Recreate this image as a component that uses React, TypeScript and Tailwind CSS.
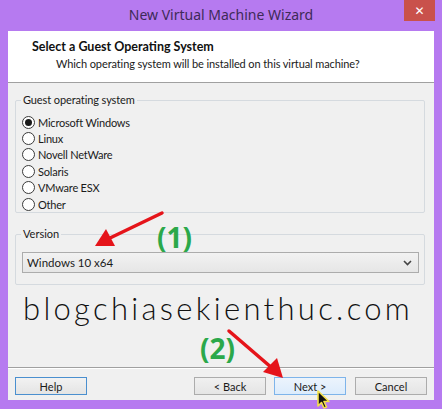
import React from "react";

const UI = '"Lato", "Noto Sans", "Liberation Sans", sans-serif';

function Radio({ label, checked }: { label: string; checked?: boolean }) {
  return (
    <div className="flex items-center h-[16.4px]">
      <div className="w-[13px] h-[13px] rounded-full border border-[#3a3a3a] bg-white flex items-center justify-center">
        {checked && <div className="w-[7px] h-[7px] rounded-full bg-[#1a1a1a]" />}
      </div>
      <span className="ml-[3px] text-[11px] tracking-[-0.2px] text-[#1a1a1a] leading-none">{label}</span>
    </div>
  );
}

function Btn({ label, variant }: { label: string; variant: "default" | "normal" | "hover" }) {
  const cls =
    variant === "default"
      ? "border-[#4a8fcf] bg-gradient-to-b from-[#f2f2f2] to-[#e4e4e4]"
      : variant === "hover"
      ? "border-[#7eb4ea] bg-gradient-to-b from-[#ecf4fc] to-[#dcecfc]"
      : "border-[#acacac] bg-gradient-to-b from-[#f0f0f0] to-[#e5e5e5]";
  return (
    <div
      className={`w-[72px] h-[18px] border ${cls} flex items-center justify-center text-[11px] text-[#1a1a1a] leading-none`}
    >
      {label}
    </div>
  );
}

export default function App() {
  return (
    <div
      className="relative w-[442px] h-[409px] bg-[#b67af0] flex flex-col overflow-hidden"
      style={{ fontFamily: UI }}
    >
      {/* title bar */}
      <div className="relative h-[31px] flex items-center justify-center">
        <span
          className="text-[14px] text-[#3e2a58] leading-none -mt-[1px]"
          style={{ fontFamily: '"Noto Sans", sans-serif' }}
        >
          New Virtual Machine Wizard
        </span>
        <div className="absolute right-[7px] top-0 w-[31px] h-[21px] bg-[#c9514b] flex items-center justify-center">
          <span className="text-white text-[12px] leading-none font-bold" style={{ fontFamily: '"DejaVu Sans", sans-serif' }}>✕</span>
        </div>
      </div>

      {/* client area */}
      <div className="mx-[8px] h-[369px] bg-[#f0f0f0] flex flex-col">
        {/* header */}
        <div className="h-[52px] bg-white border-b border-[#a0a0a0] pl-[24px] pt-[8px] flex flex-col">
          <span className="text-[12.5px] font-bold text-[#111] leading-[15px]">Select a Guest Operating System</span>
          <span className="text-[11px] tracking-[-0.1px] text-[#1a1a1a] leading-[15px] mt-[2px] pl-[24px]">
            Which operating system will be installed on this virtual machine?
          </span>
        </div>

        {/* guest OS group */}
        <div className="relative mt-[17px] ml-[7px] w-[410px] h-[113px] border border-[#d5dadf] rounded-[2px] pl-[6px] pt-[13px]">
          <span className="absolute -top-[8px] left-[5px] bg-[#f0f0f0] px-[2px] text-[11px] tracking-[-0.1px] text-[#1a1a1a] leading-[14px]">
            Guest operating system
          </span>
          <Radio label="Microsoft Windows" checked />
          <Radio label="Linux" />
          <Radio label="Novell NetWare" />
          <Radio label="Solaris" />
          <Radio label="VMware ESX" />
          <Radio label="Other" />
        </div>

        {/* version group */}
        <div className="relative mt-[21px] ml-[7px] w-[410px] h-[51px] border border-[#d5dadf] rounded-[2px] pl-[6px] pr-[5px] pt-[17px]">
          <span className="absolute -top-[8px] left-[5px] bg-[#f0f0f0] px-[2px] text-[11px] text-[#1a1a1a] leading-[14px]">
            Version
          </span>
          <div className="h-[21px] border border-[#acacac] bg-gradient-to-b from-[#f2f2f2] to-[#e6e6e6] flex items-center pl-[4px] pr-[6px]">
            <span className="flex-1 text-[11.5px] text-[#1a1a1a] leading-none">Windows 10 x64</span>
            <svg width="9" height="6" viewBox="0 0 9 6">
              <path d="M1 1 L4.5 4.5 L8 1" stroke="#444" strokeWidth="1.6" fill="none" />
            </svg>
          </div>
        </div>

        {/* watermark */}
        <div className="h-[82px] flex items-start pl-[15px] pt-[4px]">
          <span
            className="text-[31px] text-[#111] leading-[38px] tracking-[3.3px] font-light"
            style={{ fontFamily: '"Lato", "Noto Sans", sans-serif' }}
          >
            blogchiasekienthuc.com
          </span>
        </div>

        {/* separator */}
        <div className="h-px bg-[#a0a0a0]" />
        <div className="h-px bg-white" />

        {/* buttons */}
        <div className="mt-[8px] flex items-center pl-[7px] pr-[7px]">
          <Btn label="Help" variant="default" />
          <div className="flex-1" />
          <Btn label="< Back" variant="normal" />
          <div className="w-[8px]" />
          <Btn label="Next >" variant="hover" />
          <div className="w-[9px]" />
          <Btn label="Cancel" variant="normal" />
        </div>
      </div>

      {/* annotations overlay */}
      <svg className="absolute left-0 top-0 pointer-events-none" width="442" height="409" viewBox="0 0 442 409">
        <line x1="162" y1="213" x2="110" y2="238" stroke="#e5141a" strokeWidth="3.5" strokeLinecap="round" />
        <polygon points="95,246 106,229 115,246" fill="#e5141a" />
        <line x1="229" y1="331" x2="272" y2="368" stroke="#e5141a" strokeWidth="3.5" strokeLinecap="round" />
        <polygon points="283,378 263,372 277,358" fill="#e5141a" />
        <path
          d="M318 391 L318 406 L321.5 402.5 L324 408 L326.5 407 L324 401.5 L329 401.5 Z"
          fill="#111"
          stroke="#f3e04a"
          strokeWidth="1.6"
          strokeLinejoin="round"
        />
      </svg>
      <span
        className="absolute left-[157px] top-[222px] text-[28px] font-bold text-[#2ba84a] leading-[30px]"
        style={{ fontFamily: '"Open Sans", "Noto Sans", sans-serif' }}
      >
        (1)
      </span>
      <span
        className="absolute left-[200px] top-[333px] text-[28px] font-bold text-[#2ba84a] leading-[30px]"
        style={{ fontFamily: '"Open Sans", "Noto Sans", sans-serif' }}
      >
        (2)
      </span>
    </div>
  );
}
